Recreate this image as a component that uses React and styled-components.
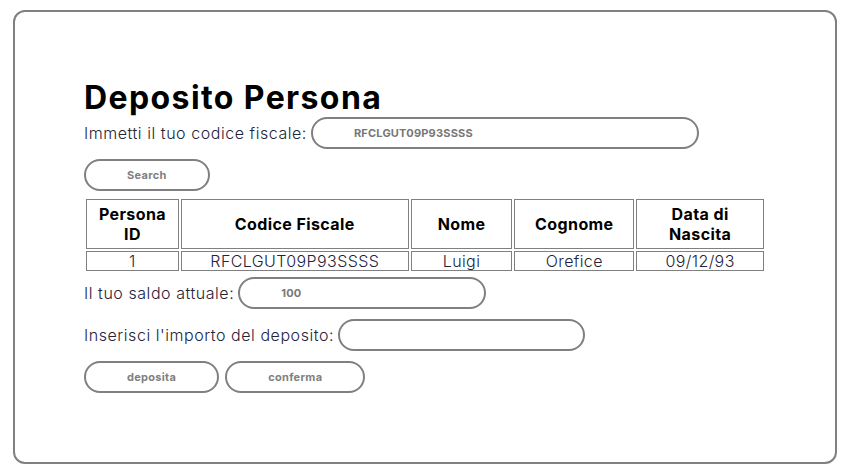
import React from 'react';
import styled, { createGlobalStyle } from 'styled-components';

const GlobalStyle = createGlobalStyle`
    html, body {
        margin: 0;
        padding: 0;
        background: #ffffff;
    }
    body {
        font-family: 'Inter', 'Open Sans', sans-serif;
        color: #1e1e2e;
    }
`;

const persone = [
    {
        id: 1,
        codiceFiscale: 'RFCLGUT09P93SSSS',
        nome: 'Luigi',
        cognome: 'Orefice',
        dataNascita: '09/12/93',
    },
];

function App() {
    return (
        <>
            <GlobalStyle />
            <Page>
                <Card>
                    <Title>Deposito Persona</Title>
                    <FieldRow>
                        <Label>Immetti il tuo codice fiscale:</Label>
                        <Field width={388} defaultValue={'RFCLGUT09P93SSSS'} />
                    </FieldRow>
                    <ButtonRow>
                        <PillButton>Search</PillButton>
                    </ButtonRow>
                    <Table>
                        <thead>
                            <tr>
                                <Th width={91}>
                                    Persona
                                    <br />
                                    ID
                                </Th>
                                <Th width={226}>Codice Fiscale</Th>
                                <Th width={100}>Nome</Th>
                                <Th width={118}>Cognome</Th>
                                <Th width={126}>
                                    Data di
                                    <br />
                                    Nascita
                                </Th>
                            </tr>
                        </thead>
                        <tbody>
                            {persone.map((p) => (
                                <tr key={p.id}>
                                    <Td>{p.id}</Td>
                                    <Td>{p.codiceFiscale}</Td>
                                    <Td>{p.nome}</Td>
                                    <Td>{p.cognome}</Td>
                                    <Td>{p.dataNascita}</Td>
                                </tr>
                            ))}
                        </tbody>
                    </Table>
                    <FieldRow gap={4}>
                        <Label>Il tuo saldo attuale:</Label>
                        <Field width={248} defaultValue={'100'} readOnly />
                    </FieldRow>
                    <FieldRow gap={10}>
                        <Label>Inserisci l'importo del deposito:</Label>
                        <Field width={247} />
                    </FieldRow>
                    <ButtonRow>
                        <PillButton>deposita</PillButton>
                        <PillButton>conferma</PillButton>
                    </ButtonRow>
                </Card>
            </Page>
        </>
    );
}

const Page = styled.div`
    padding: 10px 14px 11px 13px;
`;

const Card = styled.div`
    display: flex;
    flex-direction: column;
    align-items: flex-start;
    height: 454px;
    box-sizing: border-box;
    border: 2px solid #808080;
    border-radius: 12px;
    padding: 67px 69px 0 69px;
`;

const Title = styled.h1`
    margin: 0;
    font-size: 32px;
    font-weight: 700;
    line-height: 38px;
    letter-spacing: 1.4px;
    color: #000000;
`;

const FieldRow = styled.div`
    display: flex;
    align-items: center;
    gap: 4px;
    margin-top: ${(props) => props.gap || 0}px;
`;

const Label = styled.span`
    font-size: 16px;
    font-weight: 300;
    letter-spacing: 0.55px;
    color: #23233a;
`;

const Field = styled.input`
    width: ${(props) => props.width}px;
    height: 32px;
    box-sizing: border-box;
    border: 2px solid #808080;
    border-radius: 16px;
    padding: 0 0 0 41px;
    font-family: inherit;
    font-size: 11px;
    font-weight: 700;
    letter-spacing: 0.2px;
    color: #777777;
    outline: none;
    background: #ffffff;
`;

const ButtonRow = styled.div`
    display: flex;
    gap: 6px;
    margin-top: 10px;
`;

const PillButton = styled.button`
    height: 32px;
    box-sizing: border-box;
    border: 2px solid #808080;
    border-radius: 16px;
    padding: 0 41px;
    background: #ffffff;
    font-family: inherit;
    font-size: 11px;
    font-weight: 700;
    letter-spacing: 0.3px;
    color: #808080;
    cursor: pointer;
`;

const Table = styled.table`
    margin-top: 6px;
    border-collapse: separate;
    border-spacing: 2px;
    table-layout: fixed;
`;

const Th = styled.th`
    width: ${(props) => props.width}px;
    border: 1px solid #808080;
    padding: 4px 0;
    font-size: 16px;
    font-weight: 700;
    line-height: 20px;
    letter-spacing: 0.4px;
    color: #000000;
    text-align: center;
`;

const Td = styled.td`
    border: 1px solid #808080;
    padding: 0;
    font-size: 16px;
    font-weight: 300;
    line-height: 18px;
    letter-spacing: 0.4px;
    color: #23233a;
    text-align: center;
`;

export default App;
